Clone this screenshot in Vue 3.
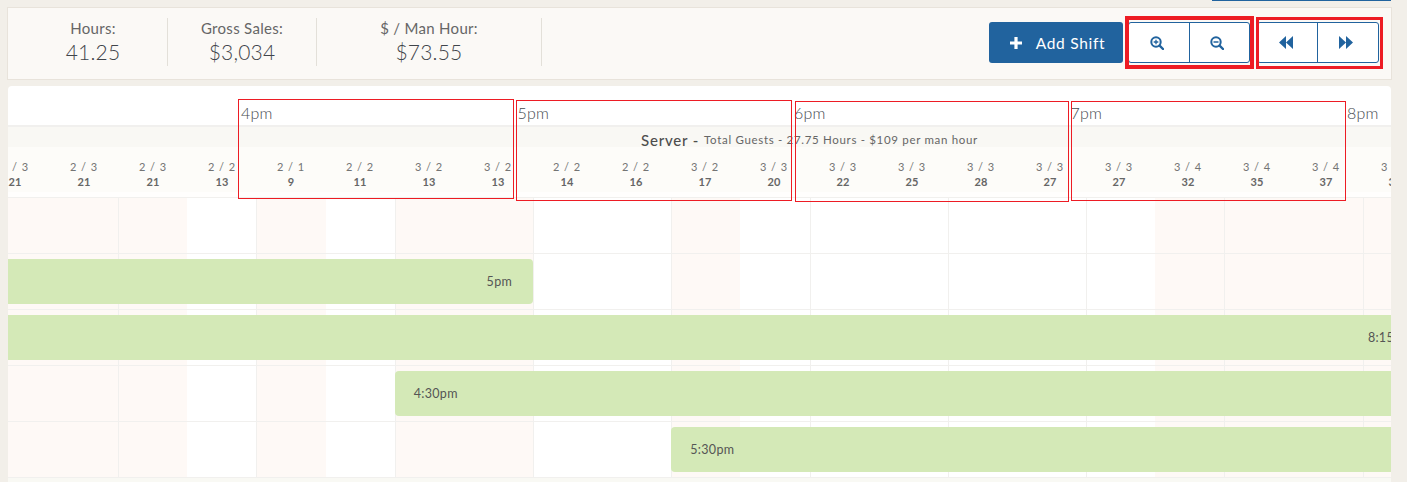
<script setup>
const stats = [
  { label: 'Hours:', value: '41.25', cls: 'w1' },
  { label: 'Gross Sales:', value: '$3,034', cls: 'w2' },
  { label: '$ / Man Hour:', value: '$73.55', cls: 'w3' },
]
const hours = ['4pm', '5pm', '6pm', '7pm', '8pm']
const cols = [
  ['2 / 3', 21], ['2 / 3', 21], ['2 / 3', 21], ['2 / 2', 13],
  ['2 / 1', 9], ['2 / 2', 11], ['3 / 2', 13], ['3 / 2', 13],
  ['2 / 2', 14], ['2 / 2', 16], ['3 / 2', 17], ['3 / 3', 20],
  ['3 / 3', 22], ['3 / 3', 25], ['3 / 3', 28], ['3 / 3', 27],
  ['3 / 3', 27], ['3 / 4', 32], ['3 / 4', 35], ['3 / 4', 37],
  ['3 / 4', 38],
]
const pink = [1,1,1,0,1,0,1,1,0,0,1,0,0,0,0,0,0,1,1,1,1]
const cells = pink.map((p, i) => ({ pink: !!p, line: i % 2 === 0 }))
const rows = [
  null,
  { cls: 'b-end', text: '5pm', style: 'grid-column: 1 / 9' },
  { cls: 'b-end b-far', text: '8:15pm', style: 'grid-column: 1 / -1' },
  { cls: 'b-start', text: '4:30pm', style: 'grid-column: 7 / -1' },
  { cls: 'b-start', text: '5:30pm', style: 'grid-column: 11 / -1' },
]
const marks = [
  { cls: 'm1' }, { cls: 'm2' }, { cls: 'm3' }, { cls: 'm4' },
]
</script>

<template>
  <div class="page">
    <div class="strip"><span class="strip-tab"></span></div>

    <header class="toolbar">
      <div class="stats">
        <div v-for="s in stats" :key="s.label" class="stat" :class="s.cls">
          <div class="stat-label">{{ s.label }}</div>
          <div class="stat-value">{{ s.value }}</div>
        </div>
      </div>
      <div class="actions">
        <button class="add">
          <svg width="12" height="12" viewBox="0 0 12 12"><path d="M4.4 0h3.2v4.4H12v3.2H7.6V12H4.4V7.6H0V4.4h4.4z" fill="#fff"/></svg>
          <span>Add Shift</span>
        </button>
        <div class="group">
          <button class="seg">
            <svg width="14" height="14" viewBox="0 0 14 14"><circle cx="6" cy="6" r="4.7" fill="none" stroke="#21639e" stroke-width="2"/><path d="M9.6 9.6 13 13" stroke="#21639e" stroke-width="2.4" stroke-linecap="round"/><path d="M3.7 6h4.6M6 3.7v4.6" stroke="#21639e" stroke-width="1.3"/></svg>
          </button>
          <button class="seg">
            <svg width="14" height="14" viewBox="0 0 14 14"><circle cx="6" cy="6" r="4.7" fill="none" stroke="#21639e" stroke-width="2"/><path d="M9.6 9.6 13 13" stroke="#21639e" stroke-width="2.4" stroke-linecap="round"/><path d="M3.5 6h5" stroke="#21639e" stroke-width="1.5"/></svg>
          </button>
        </div>
        <div class="group nav">
          <button class="seg">
            <svg width="14" height="13" viewBox="0 0 14 13"><path d="M7 0v13L0 6.5zM14 0v13L7 6.5z" fill="#21639e"/></svg>
          </button>
          <button class="seg">
            <svg width="14" height="13" viewBox="0 0 14 13"><path d="M0 0v13l7-6.5zM7 0v13l7-6.5z" fill="#21639e"/></svg>
          </button>
        </div>
      </div>
    </header>

    <section class="card">
      <div class="hours">
        <div v-for="h in hours" :key="h" class="hour">{{ h }}</div>
      </div>
      <div class="role"><b>Server -</b><span>Total Guests - 27.75 Hours - $109 per man hour</span></div>
      <div class="track cols">
        <div v-for="(c, i) in cols" :key="i" class="col">
          <div class="frac">{{ c[0] }}</div>
          <div class="num">{{ c[1] }}</div>
        </div>
      </div>
      <div class="gap"></div>
      <div v-for="(r, ri) in rows" :key="ri" class="track row">
        <div
          v-for="(c, i) in cells"
          :key="i"
          class="cell"
          :class="{ pink: c.pink, line: c.line }"
          :style="{ gridColumn: i + 1 }"
        ></div>
        <div v-if="r" class="bar" :class="r.cls" :style="r.style">{{ r.text }}</div>
      </div>
      <div class="foot"></div>
    </section>

    <i class="tool-mark t1"></i>
    <i class="tool-mark t2"></i>
    <i v-for="m in marks" :key="m.cls" class="mark" :class="m.cls"></i>
  </div>
</template>

<style scoped>
.page {
  position: relative;
  height: 482px;
  overflow: hidden;
  background: #f2efe9;
  color: #666;
  font-family: Lato, "Open Sans", sans-serif;
}
.strip {
  height: 7px;
  display: flex;
  justify-content: flex-end;
  padding-right: 16px;
}
.strip-tab {
  width: 179px;
  height: 1px;
  background: #21639e;
}
.toolbar {
  box-sizing: border-box;
  height: 73px;
  margin: 0 15px 0 7px;
  display: flex;
  justify-content: space-between;
  align-items: center;
  background: #fbf9f6;
  border: 1px solid #e8e3db;
  padding-right: 12px;
}
.stats {
  display: flex;
  height: 48px;
  margin-top: -3px;
}
.stat {
  box-sizing: border-box;
  text-align: center;
  border-right: 1px solid #e3e0d9;
}
.w1 { width: 160px; padding-left: 11px; }
.w2 { width: 149px; }
.w3 { width: 225px; }
.stat-label {
  font-size: 15px;
  line-height: 20px;
  font-weight: 400;
  letter-spacing: 0.3px;
  color: #666;
}
.stat-value {
  font-size: 21px;
  line-height: 28px;
  font-weight: 300;
  letter-spacing: 0.2px;
  color: #3f444a;
}
.actions {
  display: flex;
  align-items: center;
  gap: 6px;
  margin-top: -2px;
}
button {
  font-family: inherit;
  padding: 0;
  cursor: pointer;
}
.add {
  box-sizing: border-box;
  width: 134px;
  height: 41px;
  margin-right: -1px;
  padding-left: 3px;
  display: flex;
  align-items: center;
  justify-content: center;
  gap: 14px;
  background: #21639e;
  color: #fff;
  border: 0;
  border-radius: 3px;
  font-size: 15.5px;
  letter-spacing: 0.7px;
}
.group {
  box-sizing: border-box;
  width: 122px;
  height: 41px;
  display: flex;
  background: #fff;
  border: 1px solid #21639e;
  border-radius: 3px;
}
.group + .group { margin-left: 1px; }
.seg {
  flex: 1;
  background: none;
  border: 0;
  padding-right: 4px;
  display: flex;
  align-items: center;
  justify-content: center;
}
.seg + .seg { border-left: 1px solid #21639e; }
.nav .seg:first-child { flex: 0 0 59px; }
.card {
  margin: 6px 16px 0 8px;
  height: 396px;
  overflow: hidden;
  background: #fff;
  border-radius: 4px 4px 0 0;
}
.hours {
  box-sizing: border-box;
  height: 41px;
  padding: 17px 0 0 233px;
  display: grid;
  grid-template-columns: repeat(5, 276.5px);
  border-bottom: 2px solid #f1f0ee;
}
.hour {
  font-size: 16px;
  line-height: 20px;
  font-weight: 300;
  letter-spacing: 0.2px;
  color: #44494e;
}
.role {
  box-sizing: border-box;
  height: 20px;
  padding: 5px 0 0 633px;
  background: #f9f8f4;
  display: flex;
  align-items: center;
  gap: 5px;
  white-space: nowrap;
}
.role b {
  font-size: 15px;
  font-weight: 500;
  letter-spacing: 0.8px;
  color: #4d4d4d;
}
.role span {
  font-size: 11.5px;
  letter-spacing: 0.68px;
  color: #666;
}
.track {
  display: grid;
  grid-template-columns: repeat(21, 69.15px);
  margin-left: -28.1px;
  width: 1452.15px;
}
.track.cols {
  grid-template-columns: repeat(21, 69px);
  margin-left: -27.5px;
  height: 45px;
  background: #fdfcf9;
}
.col {
  text-align: center;
  padding-top: 13px;
  white-space: nowrap;
}
.frac {
  font-size: 11px;
  line-height: 14px;
  letter-spacing: 0.9px;
  color: #747474;
}
.num {
  font-size: 11px;
  line-height: 16px;
  font-weight: 700;
  color: #666;
}
.gap { height: 5px; background: #fffefd; }
.row {
  box-sizing: border-box;
  height: 56px;
  border-top: 1px solid #f1f0ee;
  grid-template-rows: 55px;
}
.cell { grid-row: 1; }
.pink { background: #fef9f6; }
.line { border-left: 1px solid #f1f0ee; }
.bar {
  grid-row: 1;
  z-index: 1;
  margin: 5px 0;
  background: #d4e9b7;
  border-radius: 4px;
  display: flex;
  align-items: center;
  font-size: 12.5px;
  letter-spacing: 0.3px;
  color: #555;
}
.b-end { justify-content: flex-end; padding-right: 21px; }
.b-far { padding-right: 20px; }
.b-start { padding-left: 19px; }
.foot {
  height: 4px;
  border-top: 1px solid #f1f0ee;
  background: #f9f9f4;
}
.tool-mark, .mark {
  position: absolute;
  box-sizing: border-box;
  pointer-events: none;
}
.tool-mark { border: 4px solid #ed1c24; }
.t1 { left: 1125px; top: 16px; width: 129px; height: 53px; }
.t2 { left: 1256px; top: 17px; width: 127px; height: 52px; border-width: 3px; }
.mark { border: 1px solid #ed1c24; }
.m1 { left: 238px; top: 99px; width: 276px; height: 100px; }
.m2 { left: 516px; top: 100px; width: 276px; height: 101px; }
.m3 { left: 795px; top: 101px; width: 274px; height: 101px; }
.m4 { left: 1071px; top: 101px; width: 275px; height: 100px; }
</style>
